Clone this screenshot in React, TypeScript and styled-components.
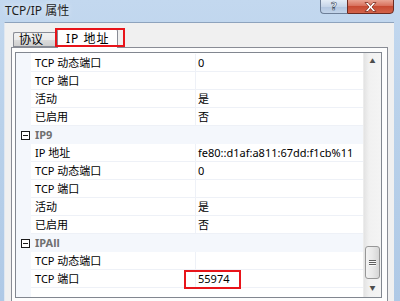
import styled, { createGlobalStyle } from 'styled-components';

const GlobalStyle = createGlobalStyle`
  html, body {
    margin: 0;
    padding: 0;
    overflow: hidden;
  }
  body {
    font-family: "Noto Sans", "Noto Sans CJK SC", sans-serif;
    font-size: 11px;
    color: #000;
  }
`;

type Row =
  | { kind: 'category'; label: string }
  | { kind: 'prop'; name: string; value: string; marked?: boolean };

const rows: Row[] = [
  { kind: 'prop', name: 'TCP 动态端口', value: '0' },
  { kind: 'prop', name: 'TCP 端口', value: '' },
  { kind: 'prop', name: '活动', value: '是' },
  { kind: 'prop', name: '已启用', value: '否' },
  { kind: 'category', label: 'IP9' },
  { kind: 'prop', name: 'IP 地址', value: 'fe80::d1af:a811:67dd:f1cb%11' },
  { kind: 'prop', name: 'TCP 动态端口', value: '0' },
  { kind: 'prop', name: 'TCP 端口', value: '' },
  { kind: 'prop', name: '活动', value: '是' },
  { kind: 'prop', name: '已启用', value: '否' },
  { kind: 'category', label: 'IPAll' },
  { kind: 'prop', name: 'TCP 动态端口', value: '' },
  { kind: 'prop', name: 'TCP 端口', value: '55974', marked: true },
];

const App = () => {
  return (
    <>
      <GlobalStyle />
      <Window>
        <TitleBar>
          <Title>TCP/IP 属性</Title>
          <CaptionButtons>
            <HelpButton>?</HelpButton>
            <CloseButton>
              <svg width="13" height="10" viewBox="0 0 13 10">
                <path
                  d="M1 0.5h3l2.5 3 2.5-3h3l-4 4.5 4 4.5h-3l-2.5-3-2.5 3h-3l4-4.5z"
                  fill="#fff"
                  stroke="#7a2a1c"
                  strokeWidth="0.8"
                />
              </svg>
            </CloseButton>
          </CaptionButtons>
        </TitleBar>

        <Client>
          <TabStrip>
            <Tab>协议</Tab>
            <Tab $active>
              IP 地址
              <Marker $tab />
            </Tab>
          </TabStrip>

          <TabPanel>
            <Grid>
              <GridRows>
                {rows.map((row, i) =>
                  row.kind === 'category' ? (
                    <CategoryRow key={i}>
                      <Margin>
                        <Expander />
                      </Margin>
                      <CategoryLabel>{row.label}</CategoryLabel>
                    </CategoryRow>
                  ) : (
                    <PropRow key={i}>
                      <Margin />
                      <NameCell>{row.name}</NameCell>
                      <ValueCell>
                        {row.value}
                        {row.marked && <Marker />}
                      </ValueCell>
                    </PropRow>
                  ),
                )}
              </GridRows>
              <ScrollBar>
                <Arrow>▲</Arrow>
                <Track />
                <Thumb>
                  <Grip />
                  <Grip />
                  <Grip />
                </Thumb>
                <Arrow>▼</Arrow>
              </ScrollBar>
            </Grid>
          </TabPanel>
        </Client>
      </Window>
    </>
  );
};

export default App;

// 창 전체 (Aero 프레임)
const Window = styled.div`
  width: 400px;
  height: 301px;
  display: flex;
  flex-direction: column;
  background: linear-gradient(180deg, #c3d8ef 0%, #b9d1ea 40%, #afc9e6 100%);
`;

const TitleBar = styled.div`
  height: 22px;
  display: flex;
  justify-content: space-between;
  align-items: flex-start;
  padding-left: 5px;
  padding-right: 6px;
`;

const Title = styled.div`
  font-size: 12px;
  line-height: 12px;
  margin-top: 5px;
  color: #1e1e1e;
  text-shadow: 0 0 6px rgba(255, 255, 255, 0.9);
`;

const CaptionButtons = styled.div`
  display: flex;
  margin-top: -1px;
`;

const HelpButton = styled.div`
  width: 27px;
  height: 15px;
  box-sizing: border-box;
  border: 1px solid #6d7f98;
  border-right: none;
  border-radius: 0 0 0 4px;
  background: linear-gradient(180deg, #e3ecf6 0%, #c7d6e9 50%, #b1c5df 51%, #c3d5ea 100%);
  font-family: "DejaVu Sans", sans-serif;
  font-size: 11px;
  font-weight: bold;
  line-height: 13px;
  text-align: center;
  color: #fff;
  -webkit-text-stroke: 0.6px #3e4f66;
`;

const CloseButton = styled.div`
  width: 47px;
  height: 15px;
  box-sizing: border-box;
  border: 1px solid #6b2b22;
  border-radius: 0 0 4px 0;
  background: linear-gradient(180deg, #e9a493 0%, #d8705c 45%, #c74a32 50%, #d3634a 100%);
  display: flex;
  align-items: center;
  justify-content: center;
`;

// 클라이언트 영역
const Client = styled.div`
  flex: 1;
  margin: 0 6px 0 4px;
  border-top: 1px solid #8ea3bd;
  border-left: 1px solid #dfe7f1;
  background: #f0f0f0;
  display: flex;
  flex-direction: column;
  min-height: 0;
`;

const TabStrip = styled.div`
  display: flex;
  align-items: flex-end;
  height: 24px;
  padding-left: 8px;
`;

const Tab = styled.div<{ $active?: boolean }>`
  position: relative;
  box-sizing: border-box;
  white-space: nowrap;
  height: ${(p) => (p.$active ? '19px' : '15px')};
  margin-bottom: ${(p) => (p.$active ? '-1px' : '0')};
  padding-left: ${(p) => (p.$active ? '8px' : '5px')};
  border: 1px solid #898c95;
  border-bottom: ${(p) => (p.$active ? 'none' : '1px solid #898c95')};
  border-right: ${(p) => (p.$active ? '1px solid #898c95' : 'none')};
  border-radius: 2px 2px 0 0;
  background: ${(p) =>
    p.$active ? '#ffffff' : 'linear-gradient(180deg, #f2f2f2 0%, #ebebeb 50%, #dddddd 51%, #cfcfcf 100%)'};
  font-size: 12px;
  line-height: ${(p) => (p.$active ? '17px' : '14px')};
  letter-spacing: ${(p) => (p.$active ? '1px' : '0')};
  z-index: ${(p) => (p.$active ? 1 : 0)};
  width: ${(p) => (p.$active ? '61px' : '44px')};
`;

const TabPanel = styled.div`
  flex: 1;
  min-height: 0;
  margin: 0 6px 0 6px;
  border: 1px solid #898c95;
  border-bottom: none;
  background: #fdfdfd;
  padding: 4px 5px 0 3px;
  display: flex;
`;

// 속성 그리드
const Grid = styled.div`
  flex: 1;
  display: flex;
  border: 1px solid #828790;
  height: 246px;
  box-sizing: border-box;
  background: #ffffff;
  overflow: hidden;
`;

const GridRows = styled.div`
  flex: 1;
  display: flex;
  flex-direction: column;
  padding-top: 1px;
  background: linear-gradient(90deg, #f4f7fc 0 15px, #ffffff 15px);
`;

const PropRow = styled.div`
  display: grid;
  grid-template-columns: 15px 165px 1fr;
  height: 18px;
  box-sizing: border-box;
  border-bottom: 1px solid #eef1f7;
`;

const CategoryRow = styled.div`
  display: grid;
  grid-template-columns: 15px 1fr;
  height: 18px;
  background: #f4f7fc;
`;

const Margin = styled.div`
  background: #f4f7fc;
  display: flex;
  align-items: center;
  justify-content: center;
  margin-bottom: -1px;
`;

const Expander = styled.div`
  width: 9px;
  height: 9px;
  box-sizing: border-box;
  border: 1px solid #1a1a1a;
  background: #fff;
  position: relative;
  margin-left: 3px;

  &::after {
    content: '';
    position: absolute;
    left: 1px;
    right: 1px;
    top: 3px;
    height: 1px;
    background: #1a1a1a;
  }
`;

const CategoryLabel = styled.div`
  padding-left: 4px;
  font-weight: bold;
  color: #707070;
  line-height: 18px;
`;

const NameCell = styled.div`
  padding-left: 4px;
  line-height: 17px;
  border-right: 1px solid #eef1f7;
  white-space: nowrap;
`;

const ValueCell = styled.div`
  position: relative;
  padding-left: 2px;
  line-height: 17px;
  white-space: nowrap;
`;

// 빨간 표시 상자
const Marker = styled.div<{ $tab?: boolean }>`
  position: absolute;
  box-sizing: border-box;
  border: 2px solid #e8141a;
  left: ${(p) => (p.$tab ? '-3px' : '-12px')};
  top: ${(p) => (p.$tab ? '-2px' : '0')};
  width: ${(p) => (p.$tab ? '70px' : '57px')};
  height: 19px;
`;

// 스크롤바
const ScrollBar = styled.div`
  width: 17px;
  display: flex;
  flex-direction: column;
  align-items: center;
  background: linear-gradient(90deg, #e3e3e3 0%, #f1f1f1 30%, #f4f4f4 100%);
  border-left: 1px solid #ececec;
`;

const Arrow = styled.div`
  height: 17px;
  font-size: 6px;
  line-height: 17px;
  color: #4d4d4d;
`;

const Track = styled.div`
  flex: 1;
`;

const Thumb = styled.div`
  width: 15px;
  height: 33px;
  box-sizing: border-box;
  border: 1px solid #979797;
  border-radius: 3px;
  background: linear-gradient(90deg, #f3f3f3 0%, #e8e8e8 50%, #d6d6d6 100%);
  display: flex;
  flex-direction: column;
  align-items: center;
  justify-content: center;
  gap: 1px;
  margin-bottom: 1px;
`;

const Grip = styled.div`
  width: 7px;
  height: 1px;
  background: #5e5e5e;
  box-shadow: 0 1px 0 #f8f8f8;
`;
